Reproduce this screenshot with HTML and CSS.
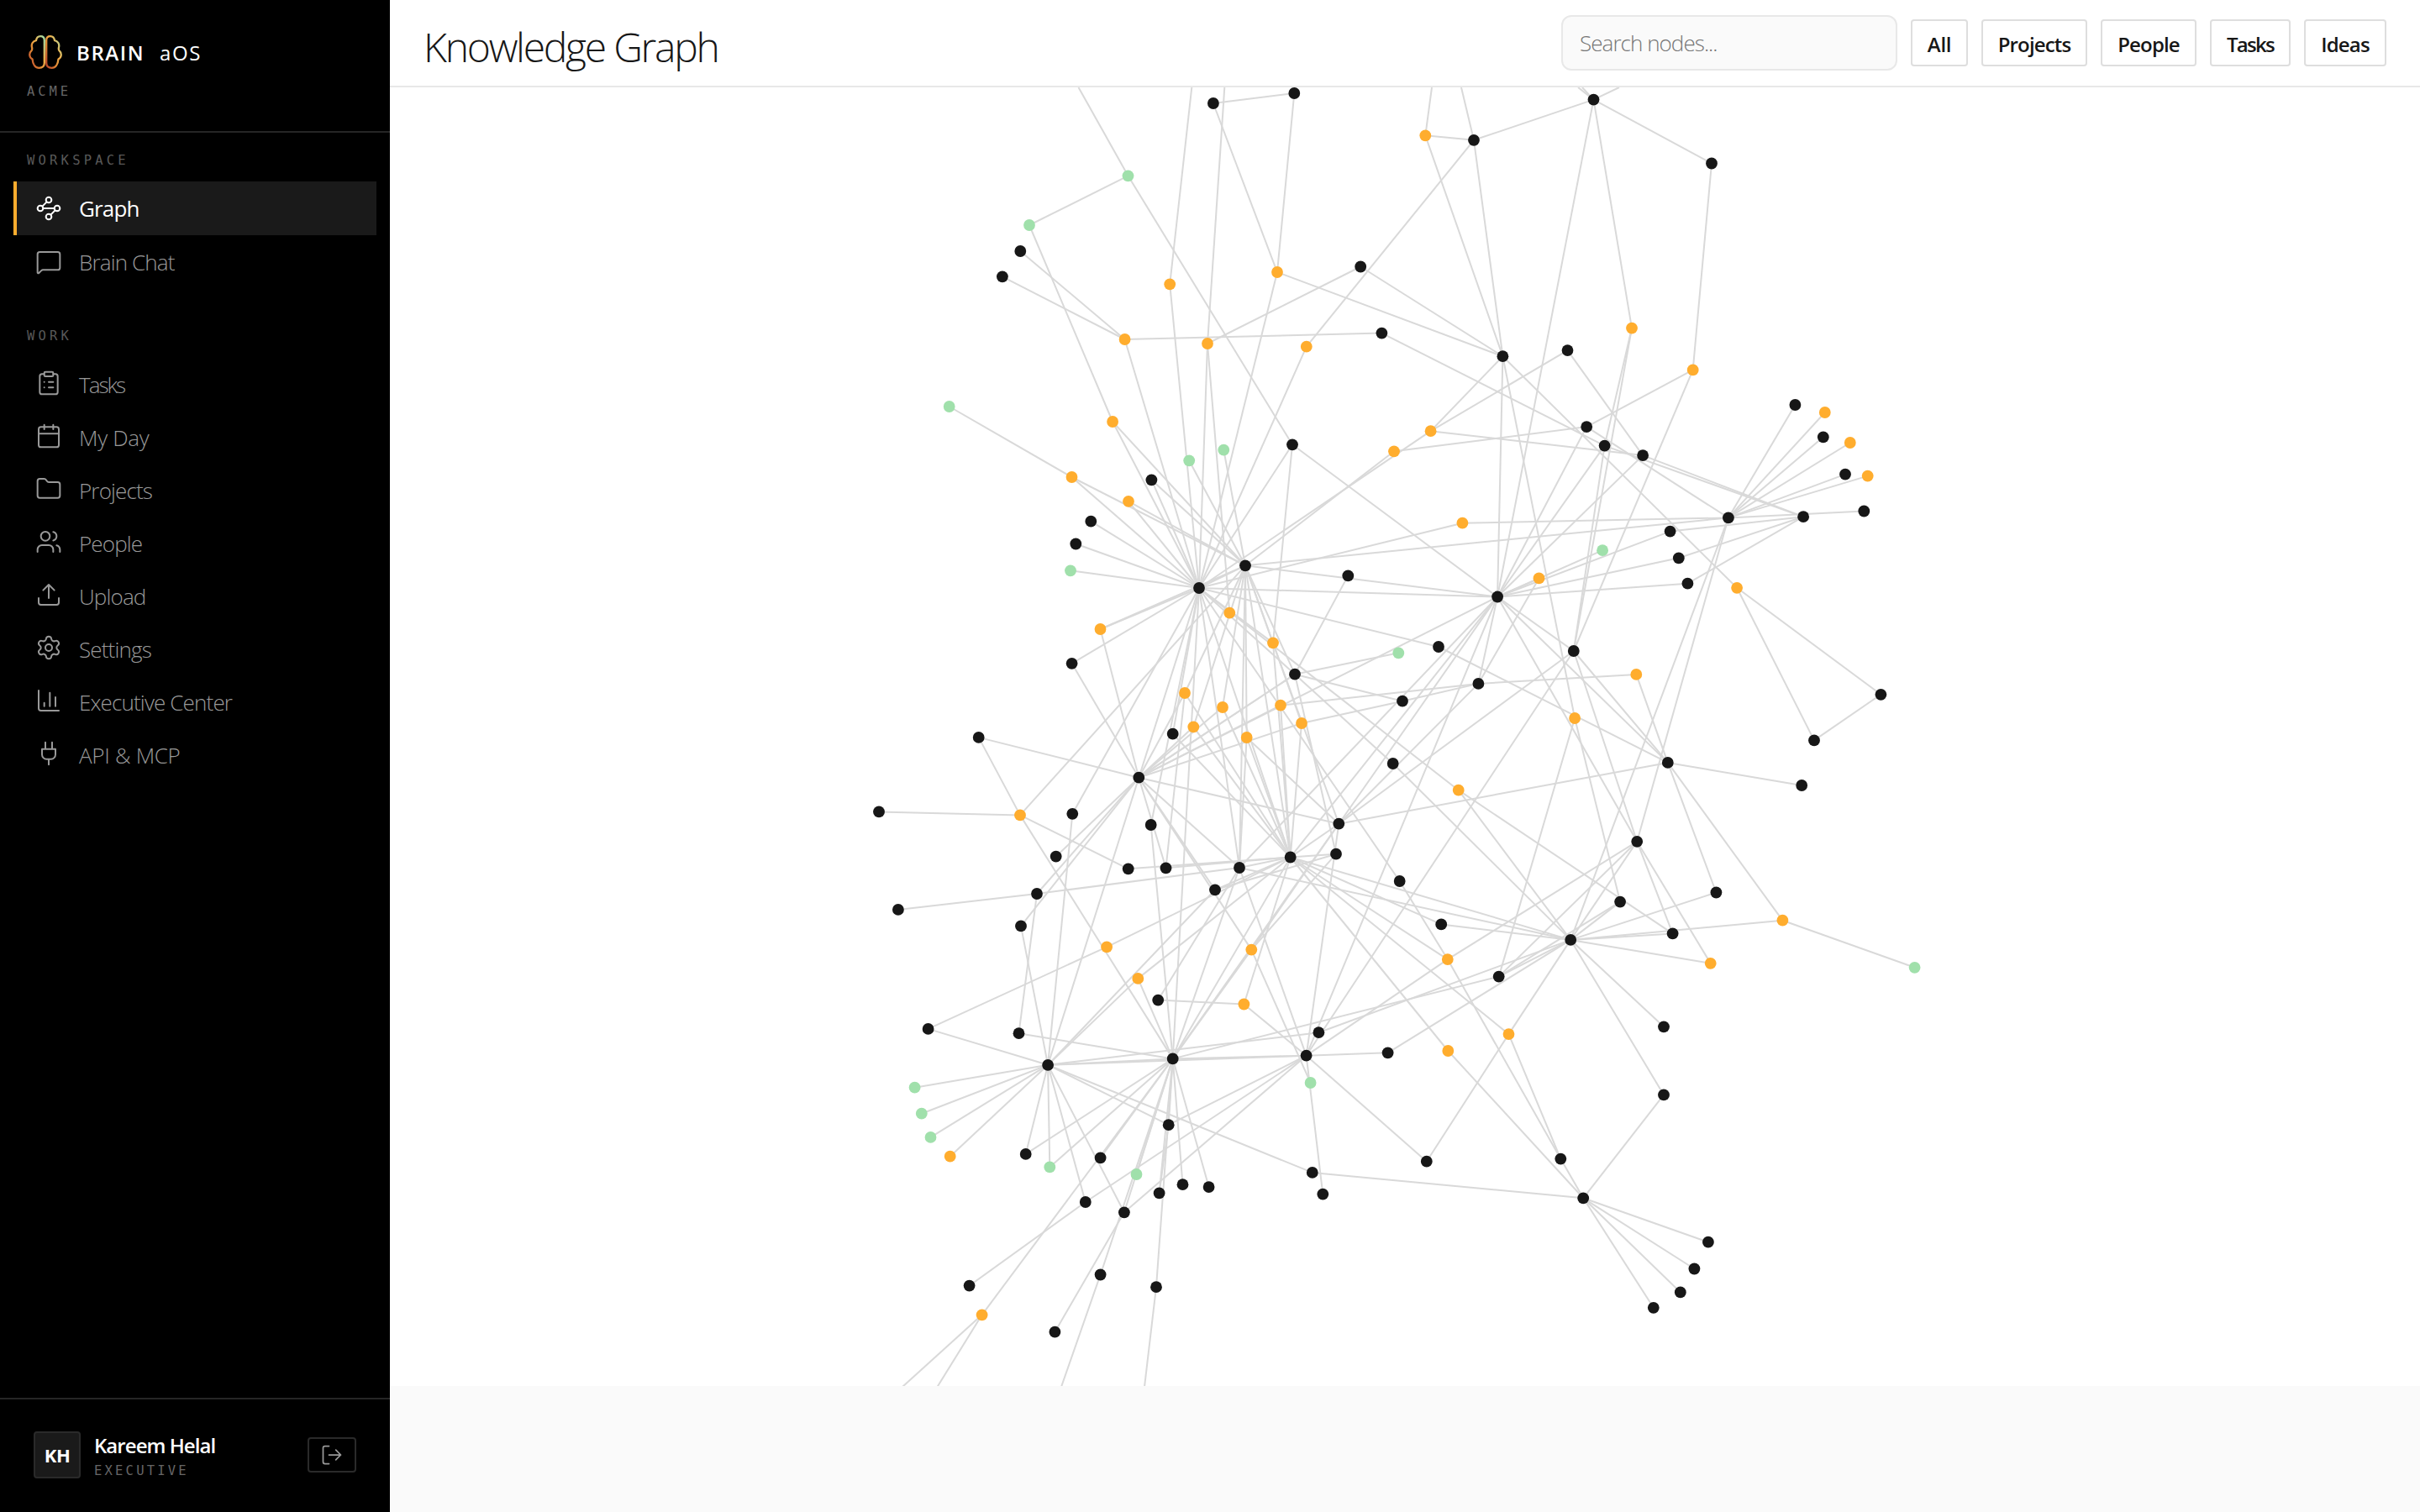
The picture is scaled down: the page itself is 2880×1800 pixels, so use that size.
FILE: index.html
```html
<!DOCTYPE html>
<html lang="en">
<head>
<meta charset="utf-8">
<title>Knowledge Graph</title>
<link rel="stylesheet" href="styles.css">
</head>
<body>
<div class="app">
  <aside class="sidebar">
    <div class="brand">
      <div class="brand-row">
        <svg class="logo" viewBox="0 0 40 40" fill="none" stroke-width="2.3" stroke-linejoin="round">
          <defs>
            <linearGradient id="lobe" x1="1" y1="0" x2="0" y2="1">
              <stop offset="0" stop-color="#9fe0ab"/>
              <stop offset=".38" stop-color="#f2b04a"/>
              <stop offset=".62" stop-color="#e08a35"/>
              <stop offset="1" stop-color="#b8402a"/>
            </linearGradient>
          </defs>
          <path stroke="url(#lobe)" d="M18.8 6C18.8 3 17 1.2 14.2 1.2C11.4 1.2 9.4 3.2 9 6.2C5.6 7 2.8 9.8 4 14.4C4.4 16 4.4 17 3.6 18.2C.4 21 .2 26 4.6 28.6C5 34.6 8 38.8 12.4 38.8C16.4 38.8 18.8 36.6 18.8 33Z"/>
          <path stroke="url(#lobe)" d="M21.2 6C21.2 3 23 1.2 25.8 1.2C28.6 1.2 30.6 3.2 31 6.2C34.4 7 37.2 9.8 36 14.4C35.6 16 35.6 17 36.4 18.2C39.6 21 39.8 26 35.4 28.6C35 34.6 32 38.8 27.6 38.8C23.6 38.8 21.2 36.6 21.2 33Z"/>
        </svg>
        <span class="brand-name">BRAIN</span><span class="brand-sub">aOS</span>
      </div>
      <div class="tenant">ACME</div>
    </div>
    <nav class="nav">
      <div class="nav-label">WORKSPACE</div>
      <a class="item active"><svg class="icon" viewBox="0 0 24 24"><circle cx="12" cy="4.5" r="2.5"/><path d="m10.2 6.3-3.9 3.9"/><circle cx="4.5" cy="12" r="2.5"/><path d="M7 12h10"/><circle cx="19.5" cy="12" r="2.5"/><path d="m13.8 17.7 3.9-3.9"/><circle cx="12" cy="19.5" r="2.5"/></svg><span>Graph</span></a>
      <a class="item chat"><svg class="icon" viewBox="0 0 24 24"><path d="M22 17a2 2 0 0 1-2 2H6.828a2 2 0 0 0-1.414.586l-2.202 2.202A.71.71 0 0 1 2 21.286V5a2 2 0 0 1 2-2h16a2 2 0 0 1 2 2z"/></svg><span>Brain Chat</span></a>
      <div class="nav-label work">WORK</div>
      <a class="item"><svg class="icon" viewBox="0 0 24 24"><rect x="8" y="2" width="8" height="4" rx="1"/><path d="M16 4h2a2 2 0 0 1 2 2v14a2 2 0 0 1-2 2H6a2 2 0 0 1-2-2V6a2 2 0 0 1 2-2h2M12 11h4M12 16h4M8 11h.01M8 16h.01"/></svg><span class="tight">Tasks</span></a>
      <a class="item"><svg class="icon" viewBox="0 0 24 24"><path d="M8 2v4M16 2v4M3 10h18"/><rect x="3" y="4" width="18" height="18" rx="2"/></svg><span class="loose">My Day</span></a>
      <a class="item"><svg class="icon" viewBox="0 0 24 24"><path d="M20 20a2 2 0 0 0 2-2V8a2 2 0 0 0-2-2h-7.9a2 2 0 0 1-1.69-.9L9.6 3.9A2 2 0 0 0 7.93 3H4a2 2 0 0 0-2 2v13a2 2 0 0 0 2 2Z"/></svg><span>Projects</span></a>
      <a class="item"><svg class="icon" viewBox="0 0 24 24"><path d="M16 21v-2a4 4 0 0 0-4-4H6a4 4 0 0 0-4 4v2M22 21v-2a4 4 0 0 0-3-3.87M16 3.13a4 4 0 0 1 0 7.75"/><circle cx="9" cy="7" r="4"/></svg><span>People</span></a>
      <a class="item"><svg class="icon" viewBox="0 0 24 24"><path d="M12 3v12M17 8l-5-5-5 5M21 15v4a2 2 0 0 1-2 2H5a2 2 0 0 1-2-2v-4"/></svg><span>Upload</span></a>
      <a class="item"><svg class="icon" viewBox="0 0 24 24"><path d="M9.671 4.136a2.34 2.34 0 0 1 4.659 0 2.34 2.34 0 0 0 3.319 1.915 2.34 2.34 0 0 1 2.33 4.033 2.34 2.34 0 0 0 0 3.831 2.34 2.34 0 0 1-2.33 4.033 2.34 2.34 0 0 0-3.319 1.915 2.34 2.34 0 0 1-4.659 0 2.34 2.34 0 0 0-3.32-1.915 2.34 2.34 0 0 1-2.33-4.033 2.34 2.34 0 0 0 0-3.831A2.34 2.34 0 0 1 6.35 6.051a2.34 2.34 0 0 0 3.319-1.915"/><circle cx="12" cy="12" r="3"/></svg><span>Settings</span></a>
      <a class="item"><svg class="icon" viewBox="0 0 24 24"><path d="M3 3v16a2 2 0 0 0 2 2h16M18 17V9M13 17V5M8 17v-3"/></svg><span>Executive Center</span></a>
      <a class="item"><svg class="icon" viewBox="0 0 24 24"><path d="M12 22v-5M9 8V2M15 8V2M18 8v5a4 4 0 0 1-4 4h-4a4 4 0 0 1-4-4V8Z"/></svg><span class="loose">API &amp; MCP</span></a>
    </nav>
    <div class="user">
      <div class="avatar">KH</div>
      <div class="who">
        <div class="user-name">Kareem Helal</div>
        <div class="role">EXECUTIVE</div>
      </div>
      <button class="logout" aria-label="Sign out"><svg class="icon" viewBox="0 0 24 24"><path d="M9 21H5a2 2 0 0 1-2-2V5a2 2 0 0 1 2-2h4M16 17l5-5-5-5M21 12H9"/></svg></button>
    </div>
  </aside>
  <main class="main">
    <header class="topbar">
      <h1>Knowledge Graph</h1>
      <div class="search">Search nodes...</div>
      <button class="filter f-all">All</button>
      <button class="filter f-projects">Projects</button>
      <button class="filter f-people">People</button>
      <button class="filter f-tasks">Tasks</button>
      <button class="filter f-ideas">Ideas</button>
    </header>
    <svg class="graph" id="graph" viewBox="464 104 2416 1546"></svg>
  </main>
</div>
<script src="graph.js"></script>
</body>
</html>
```
FILE: graph.js
```js
// Node table: id, colour (k = black, o = orange, g = green, x = off-canvas), x, y
const NODES = `
a1 g 1342.5 209.3;a2 g 1225 268;a3 k 1214.3 299;a4 k 1192.9 329.3;a5 o 1392.2 338.3;a6 o 1520 324;a7 k 1443.9 123;a8 k 1540.3 111
a9 o 1338.6 404;a10 o 1437 409;a11 o 1554.8 412.7;a12 g 1129.7 484;a13 o 1324.1 502;a14 o 1275.5 568;a15 k 1370.4 571.3;a16 g 1415.2 548.3
a17 g 1456.3 535.7;a18 k 1538 529.3;a19 o 1343 596.8
b1 o 1696.3 161.3;b2 k 1754 166.8;b3 k 1896.5 118.6;b4 k 2037 194.5;b5 k 1619.2 317.5;b6 k 1644.4 396.6;b7 k 1788.4 424.2;b8 k 1865.5 417.1
b9 o 1942 390.6;b10 o 2014.7 440.4;b11 k 1888.2 508.1;b12 k 1909.6 530.6;b13 k 1955.1 542.1;b14 o 1702.6 513.2;b15 o 1659 537.3;b16 o 1740.4 622.7
b17 g 1907.1 655.2;b18 k 1987.6 632.6;b19 k 1997.8 664.3;b20 k 2008.4 694.7;b21 o 1831.5 688.4;b22 k 1782.1 710.5;b23 o 2067.1 699.8
b24 k 2056.9 616.4;b25 k 2146.1 615.2;b26 k 2218.3 608.5;b27 o 2222.7 566.6;b28 k 2196 564.6;b29 o 2201.8 527;b30 k 2169.8 520.3
b31 o 2171.8 491;b32 k 2136.4 482;b33 k 1604.3 685.4
c1 k 1298.3 620.7;c2 k 1280.3 647.5;c3 g 1274 679.3;c4 o 1309.5 749;c5 k 1275.6 789.8;c6 k 1164.7 877.9;c7 k 1046 966.4;c8 o 1214 970.4
c9 k 1276.3 968.8;c10 k 1256.7 1019.6;c11 k 1355.3 925.7
d1 k 1427 700;d2 k 1482 673.3;d3 o 1463.3 729.7;d4 o 1515 765.3;d5 k 1541 802.7;d6 g 1664.3 777.3;d7 k 1669 834.7;d8 o 1524 839.7
d9 o 1549 861;d10 o 1483.7 878;d11 o 1455 842;d12 o 1410 825;d13 o 1420.3 865.3;d14 k 1395.7 873.7;d15 k 1657.7 909;d16 k 1593.3 980.7
d17 k 1590 1016.7;d18 k 1535.7 1020.5;d19 k 1475 1033;d20 k 1446 1059.3;d21 k 1387.5 1033.3;d22 k 1342.7 1034.3;d23 k 1369.7 982;d24 k 1665.7 1049
d25 k 1234 1064;e1 k 1215 1102.4
f1 k 1712 770;f2 k 1759.4 813.9;f3 k 1872.8 775;f4 o 1947.3 802.9;f5 o 1874.1 855;f6 k 1984.8 907.9;f7 k 2238.4 826.8;f8 k 2159 881.4
f9 k 2144.2 935;f10 o 1735.7 940.7;f11 k 1948.2 1001.8;f12 k 2042.4 1062.5;f13 k 1928.1 1073.6;f14 k 1990.6 1111.4;f15 o 2121.4 1095.7
f16 g 2278.6 1151.8;f17 o 2035.7 1146.8;f18 k 1869.2 1118.9;f19 k 1715.2 1100.4;f20 o 1722.8 1142.1
g1 k 1783.7 1162.6;g2 o 1795.5 1231.1;g3 o 1723.3 1251;g4 k 1651.6 1253.3;g5 k 1980 1222.3;g6 k 1980 1303.4;g7 k 1857.3 1379.6
g8 k 1884.2 1426.3;g9 k 1697.8 1382.7;g10 k 2032.9 1478.7;g11 k 2016.4 1510.5;g12 k 1999.8 1538.4;g13 k 1967.8 1556.8;g14 k 1569.4 1229.2
h1 k 1068.9 1082.9;h2 o 1317.1 1127.3;h3 o 1354.3 1164.9;h4 k 1378.2 1190.6;h5 o 1489.3 1130.6;h6 o 1480.4 1195.5;h7 k 1104.6 1224.9
h8 k 1212.5 1230.2;h9 k 1247.1 1267.8;h10 k 1395.7 1260.4;h11 k 1554.6 1256.7;h12 g 1559.6 1289;h13 g 1088.6 1294.7;h14 g 1096.8 1325.7
h15 g 1107.5 1353.9;h16 o 1130.7 1376.7;h17 k 1220.7 1373.9;h18 g 1249.3 1389.4;h19 k 1309.6 1378.4;h20 g 1352.5 1398;h21 k 1390.7 1339.2
h22 k 1291.8 1431;h23 k 1337.9 1443.3;h24 k 1379.6 1420.4;h25 k 1407.5 1410.2;h26 k 1438.6 1413.1;h27 k 1561.8 1395.9;h28 k 1574.3 1421.6
h29 k 1153.6 1530.6;h30 o 1168.6 1565.3;h31 k 1309.6 1517.5;h32 k 1255.4 1585.7;h33 k 1376 1532.2
x1 x 1283.5 104;x2 x 1418.3 104;x3 x 1457.3 104;x4 x 1704 104;x5 x 1739 104;x6 x 1878 104;x7 x 1883 104;x8 x 1927 104
x9 x 1074 1651;x10 x 1115.5 1651;x11 x 1263 1651;x12 x 1362 1651`;

// Adjacency list: node > neighbours
const EDGES = `
a1>x1 a2 a18;a2>a13;a9>a3 a4 b6 d1;a5>x2 d1;a10>x3 d1 d3 b5;a6>a7 a8 b7 d1;a7>a8;a11>b2 d1;a14>a12 d1 d2;a13>d1 d2;a15>d1 d2;a19>d1 d2
d2>a16 a17;a18>d1 d4 b22;b15>d2 b11;b14>d1 b7 b8 b13;b16>d1 b24;d2>b24 b22;d1>b22 f1;f1>f6
b1>x4 b2 b7;b2>x5 b7 b3;b3>x6 x7 x8 b4 b9 b22;b4>b10;b5>b7;b6>b12;b12>b25 b22 f3;b13>b25 b22 b8;b7>b23 b22 f5;b9>b12 f3;b10>b11 f3
b11>b24 b22;b24>b32 b31 b30 b29 b28 b27 b26 f11 f18;b25>b18 b19 b20;b22>b17 b18 b19 b20 b21;b21>f2;b23>f7 f8;f7>f8
b22>f3 f6 f11 f2 c11 d19 d18 d16 h11;f3>f6 f11 d16 h11;f2>f4 d8 d7 d16;d9>d7;f6>d16 f4 f9 f12 f15;f5>f13 g1;f15>f16 f18
f10>d1 f18 f14;d15>d5 f18;d24>d1 f20;f20>g7 f11 h11;f11>f18 g1 f14 f17
f18>f12 f13 f14 f17 g5 g6 g2 g4 g1 g14 f19 d18 d19;g1>f13 h10;f19>d18;d18>f20 g2 g3;g3>g8;g2>g7 g9;g7>g8;g6>g8;g8>g10 g11 g12 g13 h27
h11>g4 g9 h28 h9 h10 d19 d16;h12>h5;h27>h9;g14>h9
h9>h7 h13 h14 h15 h16 h17 h18 h22 h23 h21 e1 c9 c11 h3 h10 d20;h2>h7 d18;h8>h10 d25;d25>h1 d19 c11;e1>c11
c8>c7 c6 d2 d22 h10;c11>c6 c10 c4 c5 d1 d20 h5 d21 d19 d16 d5 d8 d9 d13 d12 d11;c4>d1 d2;d1>c1 c2 c3 c5 c9 d14 d23 d4 d5 d18 d19 h10
d2>d12 d13 d11 d19 d10 d4 d5 d9 d18 d1;d5>b33 d6 d7 d17 c11;d4>d18 d16;d18>d8 d9 d10 d11 d12 d13 d14 d17 d16 d19 d21 d22 h3 h6 h10;d10>d19 d16
d23>h10;d21>d12;d20>d17 d18;h4>d19 h6;h10>d19 d16 h5 h3;h5>d16 d17;h6>h11
h10>h17 h18 h19 h20 h21 h24 h25 h26 h23 h31 h33 h30;h11>h21 h22 h23;h21>h24;h22>h29;h23>h32;h30>x9 x10;h31>x11;h33>x12`;

const COLORS = { k: '#171717', o: '#ffad2e', g: '#a0e0ab' };
const at = {};
let dots = '', lines = '';
NODES.trim().split(/[;\n]+/).forEach(row => {
  const [id, c, x, y] = row.trim().split(/\s+/);
  at[id] = [x, y];
  if (COLORS[c]) dots += `<circle cx="${x}" cy="${y}" r="6.9" fill="${COLORS[c]}"/>`;
});
EDGES.trim().split(/[;\n]+/).forEach(row => {
  const [from, to] = row.split('>');
  to.trim().split(/\s+/).forEach(id => {
    const [x1, y1] = at[from.trim()], [x2, y2] = at[id];
    lines += `<line x1="${x1}" y1="${y1}" x2="${x2}" y2="${y2}"/>`;
  });
});
document.getElementById('graph').innerHTML = `<g stroke="#d9d9d9" stroke-width="2">${lines}</g>${dots}`;
```
FILE: styles.css
```css
* { box-sizing: border-box; }
body { margin: 0; background: #fafafa; font-family: "Open Sans", "Noto Sans", sans-serif; color: #171717; }
button { font: inherit; color: inherit; margin: 0; padding: 0; }
.app { display: flex; width: 2880px; height: 1800px; overflow: hidden; }

.sidebar { width: 464px; flex: none; background: #000; color: #fff; display: flex; flex-direction: column; }
.brand { height: 158px; border-bottom: 2px solid #262626; padding: 42px 32px 0; }
.brand-row { display: flex; align-items: center; height: 40px; padding-left: 2px; }
.logo { width: 40px; height: 40px; margin-right: 17px; flex: none; }
.brand-name { font-size: 24px; font-weight: 600; letter-spacing: 1.6px; width: 99px; }
.brand-sub { font-size: 24px; letter-spacing: 1.6px; }
.tenant, .nav-label, .role { font-family: "DejaVu Sans Mono", monospace; font-size: 15.5px; color: #666; }
.tenant { letter-spacing: 3.9px; line-height: 20px; margin-top: 17px; }

.nav { flex: 1; padding: 0 16px; }
.nav-label { height: 58px; padding: 23px 16px 0; line-height: 20px; letter-spacing: 4.2px; color: #595959; }
.nav-label.work { height: 81px; padding-top: 47px; }
.item { display: flex; align-items: center; height: 63px; padding-left: 26px; font-size: 26px; font-weight: 300; letter-spacing: -.85px; color: #999; }
.item span { padding-top: 4px; }
.item .tight { letter-spacing: -2px; }
.item .loose { letter-spacing: -.3px; }
.item.active { height: 64px; padding-left: 22px; border-left: 4px solid #ffad2e; background: #1a1a1a; color: #fff; font-weight: 400; }
.item.active span, .item.chat span { padding-top: 0; }
.icon { width: 32px; height: 32px; flex: none; margin-right: 20px; fill: none; stroke: currentColor; stroke-width: 1.5; stroke-linecap: round; stroke-linejoin: round; }

.user { height: 136px; border-top: 2px solid #262626; padding: 0 40px 2px; display: flex; align-items: center; }
.avatar { width: 56px; height: 56px; border: 2px solid #2a2a2a; border-radius: 4px; background: #1a1a1a; display: flex; align-items: center; justify-content: center; font-size: 22px; font-weight: 700; letter-spacing: -.5px; }
.who { flex: 1; padding: 2px 0 0 16px; }
.user-name { font-size: 24px; font-weight: 600; line-height: 32px; letter-spacing: -.95px; }
.role { letter-spacing: 3.2px; line-height: 22px; margin-top: 3px; }
.logout { width: 58px; height: 42px; border: 2px solid #2a2a2a; border-radius: 4px; background: none; color: #999; display: flex; align-items: center; justify-content: center; }
.logout .icon { width: 28px; height: 28px; margin: 0; }

.main { flex: 1; min-width: 0; }
.topbar { height: 104px; background: #fff; border-bottom: 2px solid #e8e8e8; display: flex; align-items: center; gap: 16px; padding-right: 40px; }
h1 { margin: 0 auto 0 40px; font-size: 48px; font-weight: 300; line-height: 64px; padding-top: 9px; letter-spacing: -2.25px; }
.search { width: 400px; height: 66px; border: 2px solid #e8e8e8; border-radius: 12px; background: #fafafa; padding-left: 20px; font-size: 26px; font-weight: 300; letter-spacing: -.95px; color: #757575; line-height: 63px; }
.filter { height: 56px; border: 2px solid #dedede; border-radius: 4px; background: #fff; padding-top: 2px; font-size: 24px; font-weight: 600; letter-spacing: -.85px; text-align: center; white-space: nowrap; }
.f-all { width: 68px; letter-spacing: -.3px; }
.f-projects { width: 126px; }
.f-people { width: 114px; }
.f-tasks { width: 96px; letter-spacing: -1.7px; }
.f-ideas { width: 98px; }
.graph { display: block; width: 2416px; height: 1546px; background: #fff; }
```
